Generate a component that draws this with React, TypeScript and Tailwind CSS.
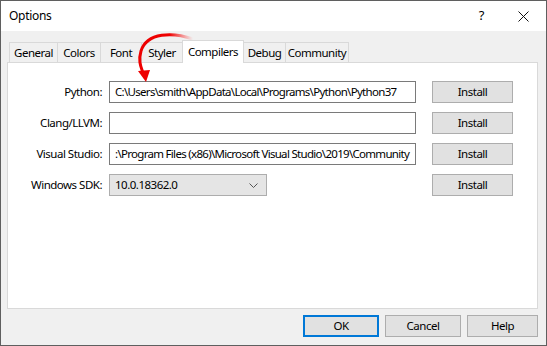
import React from 'react';

const tabs = [
    { name: 'General', w: 'w-[49px]' },
    { name: 'Colors', w: 'w-[44px]' },
    { name: 'Font', w: 'w-[42px]' },
    { name: 'Styler', w: 'w-[42px]' },
    { name: 'Compilers', w: 'w-[62px]' },
    { name: 'Debug', w: 'w-[43px]' },
    { name: 'Community', w: 'w-[64px]' },
];

const rows = [
    { label: 'Python:', value: 'C:\\Users\\smith\\AppData\\Local\\Programs\\Python\\Python37' },
    { label: 'Clang/LLVM:', value: '' },
    { label: 'Visual Studio:', value: ':\\Program Files (x86)\\Microsoft Visual Studio\\2019\\Community' },
];

const font = { fontFamily: '"Noto Sans", "Open Sans", sans-serif' };

const InstallButton = () => (
    <button className="ml-[16px] w-[81px] h-[22px] bg-[#e1e1e1] border border-[#adadad] text-black leading-none">
        Install
    </button>
);

const App: React.FC = () => {
    return (
        <div className="relative w-[547px] h-[346px] border border-[#5f5f5f] flex flex-col bg-[#f0f0f0] text-black text-[11.5px] tracking-[-0.5px] overflow-hidden" style={font}>
            {/* title bar */}
            <div className="h-[30px] bg-white flex items-center shrink-0">
                <span className="ml-[8px] text-[12px] tracking-[-0.3px]">Options</span>
                <span className="ml-auto mr-[34px] text-[13px]">?</span>
                <svg width="11" height="11" viewBox="0 0 11 11" className="mr-[17px]">
                    <path d="M0.5 0.5 L10.5 10.5 M10.5 0.5 L0.5 10.5" stroke="#111" strokeWidth="1" />
                </svg>
            </div>

            <div className="flex-1 flex flex-col pt-[9px] pl-[6px] pr-[8px] pb-[8px]">
                {/* tabs */}
                <div className="flex items-end h-[22px] pl-[2px]">
                    {tabs.map((t) => {
                        const active = t.name === 'Compilers';
                        return active ? (
                            <div key={t.name} className={`${t.w} relative z-10 -ml-px h-[23px] mb-[-1px] bg-white border border-b-0 border-[#d9d9d9] flex items-start justify-center pt-[2px]`}>
                                {t.name}
                            </div>
                        ) : (
                            <div key={t.name} className={`${t.w} -ml-px first:ml-0 h-[20px] bg-[#f0f0f0] border border-b-0 border-[#d9d9d9] flex items-center justify-center pt-[1px]`}>
                                {t.name}
                            </div>
                        );
                    })}
                </div>

                {/* panel */}
                <div className="h-[247px] bg-white border border-[#d9d9d9] flex flex-col gap-[9px] pt-[18px]">
                    {rows.map((r) => (
                        <div key={r.label} className="flex items-center">
                            <div className="w-[94px] text-right">{r.label}</div>
                            <div className="ml-[7px] w-[307px] h-[22px] border border-[#7a7a7a] bg-white flex items-center pl-[5px] whitespace-nowrap overflow-hidden tracking-[-0.7px]">
                                {r.value}
                            </div>
                            <InstallButton />
                        </div>
                    ))}
                    <div className="flex items-center">
                        <div className="w-[94px] text-right">Windows SDK:</div>
                        <div className="ml-[7px] w-[158px] h-[22px] border border-[#adadad] bg-[#e5e5e5] flex items-center pl-[5px] pr-[8px]">
                            <span>10.0.18362.0</span>
                            <svg width="9" height="5" viewBox="0 0 9 5" className="ml-auto">
                                <path d="M0.5 0.5 L4.5 4.5 L8.5 0.5" stroke="#555" fill="none" />
                            </svg>
                        </div>
                        <div className="ml-[149px]">
                            <InstallButton />
                        </div>
                    </div>
                </div>

                {/* bottom buttons */}
                <div className="flex justify-end mt-[6px] gap-[6px]">
                    <button className="w-[76px] h-[22px] bg-[#e1e1e1] border-2 border-[#0078d7] leading-none">OK</button>
                    <button className="w-[76px] h-[22px] bg-[#e1e1e1] border border-[#adadad] leading-none">Cancel</button>
                    <button className="w-[71px] h-[22px] bg-[#e1e1e1] border border-[#adadad] leading-none">Help</button>
                </div>
            </div>

            {/* red annotation arrow */}
            <svg className="absolute left-0 top-0 pointer-events-none" width="547" height="346">
                <defs>
                    <linearGradient id="arrowFade" x1="192" y1="0" x2="145" y2="0" gradientUnits="userSpaceOnUse">
                        <stop offset="0" stopColor="#ff3030" stopOpacity="0" />
                        <stop offset="0.5" stopColor="#ee0000" stopOpacity="1" />
                        <stop offset="1" stopColor="#ee0000" stopOpacity="1" />
                    </linearGradient>
                </defs>
                <path d="M192 38 C172 31, 146 31, 140 50 C137 60, 140 66, 142 72" stroke="url(#arrowFade)" strokeWidth="3" fill="none" strokeLinecap="round" />
                <polygon points="137,70 149,69 145,81" fill="#ee0000" />
            </svg>
        </div>
    );
};

export default App;
